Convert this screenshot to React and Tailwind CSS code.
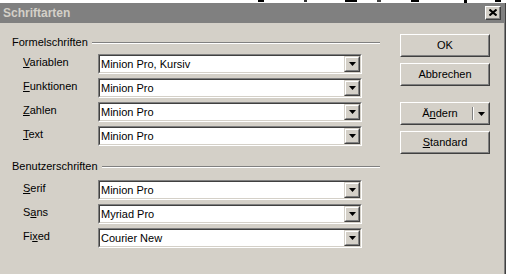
import React from "react";

function Triangle() {
  return (
    <svg width="7" height="4" viewBox="0 0 7 4" className="block">
      <path d="M0 0H7L3.5 4Z" fill="#000" />
    </svg>
  );
}

function DropBtn() {
  return (
    <div className="w-[16px] h-[16px] border border-t-[#d4d0c8] border-l-[#d4d0c8] border-b-[#404040] border-r-[#404040]">
      <div className="w-full h-full border border-t-white border-l-white border-b-[#808080] border-r-[#808080] bg-[#d4d0c8] flex items-center justify-center">
        <Triangle />
      </div>
    </div>
  );
}

function Combo({ value }) {
  return (
    <div className="w-[264px] h-[20px] border border-t-[#808080] border-l-[#808080] border-b-white border-r-white">
      <div className="h-full border border-t-[#404040] border-l-[#404040] border-b-[#d4d0c8] border-r-[#d4d0c8] bg-white flex items-center">
        <span className="flex-1 pl-[1px] text-[11px] leading-[13px] text-black whitespace-nowrap">{value}</span>
        <DropBtn />
      </div>
    </div>
  );
}

function Row({ label, value }) {
  return (
    <div className="flex items-center h-[20px]">
      <div className="w-[86px] pl-[11px] pb-[3px] text-[11px] leading-[13px] text-black whitespace-nowrap">{label}</div>
      <Combo value={value} />
    </div>
  );
}

function GroupHeader({ title }) {
  return (
    <div className="flex items-center h-[13px]">
      <span className="text-[11px] leading-[13px] text-black whitespace-nowrap">{title}</span>
      <div className="flex-1 ml-[4px] border-t border-t-[#808080] border-b border-b-white" />
    </div>
  );
}

function Button({ children, className = "" }) {
  return (
    <div className={"w-[90px] h-[23px] border border-t-white border-l-white border-b-[#404040] border-r-[#404040] " + className}>
      <div className="w-full h-full border border-t-[#d4d0c8] border-l-[#d4d0c8] border-b-[#808080] border-r-[#808080] bg-[#d4d0c8] flex items-center justify-center text-[11px] leading-[13px] text-black">
        {children}
      </div>
    </div>
  );
}

const U = ({ children }) => <span className="underline underline-offset-[1px]">{children}</span>;

export default function App() {
  return (
    <div className="w-[507px] h-[274px] overflow-hidden bg-white flex flex-col font-['Liberation_Sans',Arial,sans-serif]">
      <div className="h-[3px] flex items-start shrink-0">
        <div className="ml-[258px] w-[6px] h-[2px] bg-black" />
        <div className="ml-[40px] w-[3px] h-[2px] bg-[#333]" />
        <div className="ml-[38px] w-[12px] h-[2px] bg-black" />
        <div className="ml-[20px] w-[4px] h-[2px] bg-[#444]" />
        <div className="ml-[30px] w-[8px] h-[2px] bg-black" />
        <div className="ml-[45px] w-[3px] h-[3px] bg-black" />
        <div className="ml-[28px] w-[6px] h-[2px] bg-black" />
      </div>
      <div className="flex flex-1">
        <div className="w-[506px] flex flex-col border-r border-r-[#404040]">
          <div className="h-[20px] bg-[#808080] flex items-center justify-between pl-[3px] pr-[3px] shrink-0 border-r border-r-[#808080]">
            <span className="text-[12px] leading-[14px] font-bold text-[#d4d0c8]">Schriftarten</span>
            <div className="w-[16px] h-[14px] border border-t-white border-l-white border-b-[#404040] border-r-[#404040]">
              <div className="w-full h-full bg-[#d4d0c8] border-b border-r border-b-[#808080] border-r-[#808080] flex items-center justify-center">
                <svg width="8" height="7" viewBox="0 0 8 7">
                  <path d="M0.5 0.5L7.5 6.5M7.5 0.5L0.5 6.5" stroke="#000" strokeWidth="2" />
                </svg>
              </div>
            </div>
          </div>
          <div className="flex-1 bg-[#d4d0c8] flex pl-[12px] border-r border-r-[#808080]">
            <div className="w-[368px] pt-[13px] flex flex-col">
              <GroupHeader title="Formelschriften" />
              <div className="mt-[5px] flex flex-col gap-[4px]">
                <Row label={<><U>V</U>ariablen</>} value="Minion Pro, Kursiv" />
                <Row label={<><U>F</U>unktionen</>} value="Minion Pro" />
                <Row label={<><U>Z</U>ahlen</>} value="Minion Pro" />
                <Row label={<><U>T</U>ext</>} value="Minion Pro" />
              </div>
              <div className="mt-[14px]">
                <GroupHeader title="Benutzerschriften" />
              </div>
              <div className="mt-[7px] flex flex-col gap-[4px]">
                <Row label={<><U>S</U>erif</>} value="Minion Pro" />
                <Row label={<>S<U>a</U>ns</>} value="Myriad Pro" />
                <Row label={<>Fi<U>x</U>ed</>} value="Courier New" />
              </div>
            </div>
            <div className="ml-[20px] pt-[11px] flex flex-col">
              <Button>OK</Button>
              <Button className="mt-[6px]">Abbrechen</Button>
              <Button className="mt-[16px]">
                <div className="flex items-center w-full">
                  <span className="flex-1 text-center pl-[6px]">Ä<U>n</U>dern</span>
                  <div className="h-[13px] border-l border-l-[#808080] border-r border-r-white" />
                  <div className="w-[14px] flex justify-center"><Triangle /></div>
                </div>
              </Button>
              <Button className="mt-[6px]"><span><U>S</U>tandard</span></Button>
            </div>
          </div>
        </div>
        <div className="w-[1px] bg-white" />
      </div>
    </div>
  );
}
